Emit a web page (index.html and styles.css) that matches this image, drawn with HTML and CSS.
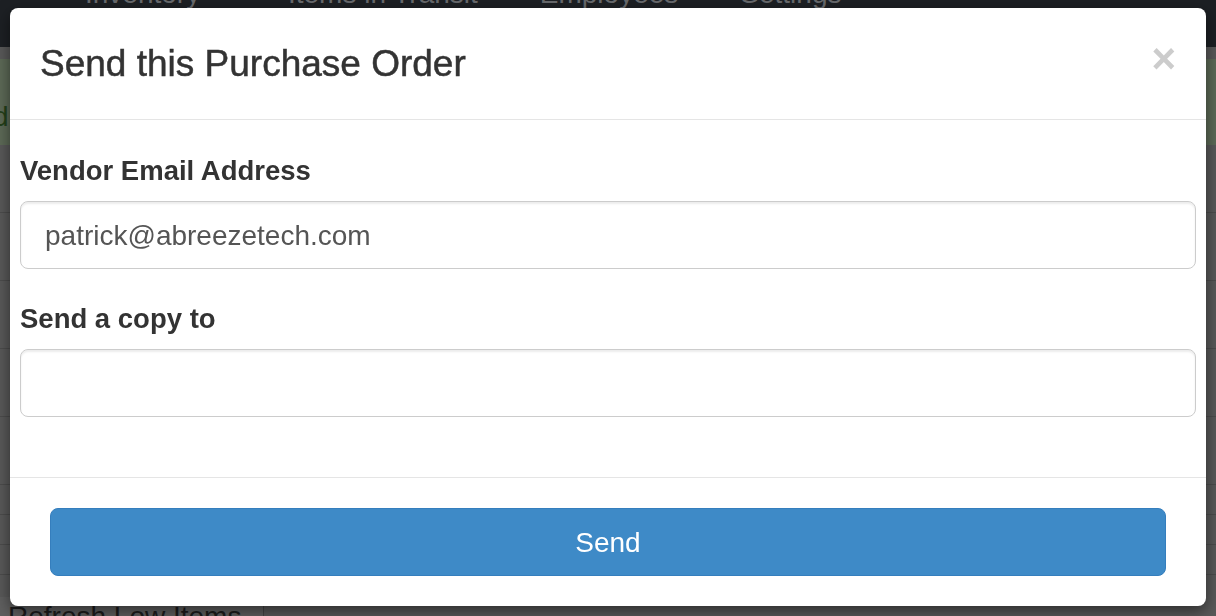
FILE: index.html
```html
<!DOCTYPE html>
<html lang="en">
<head>
    <meta charset="UTF-8">
    <meta name="viewport" content="width=device-width, initial-scale=1.0">
    <title>Send Purchase Order</title>
    <link rel="stylesheet" href="styles.css">
</head>
<body>
    <div class="page">
        <nav class="navbar">
            <ul class="nav">
                <li>Inventory <span class="caret"></span></li>
                <li>Items in Transit</li>
                <li>Employees</li>
                <li>Settings <span class="caret"></span></li>
            </ul>
        </nav>

        <div class="alert">draft saved</div>

        <div class="rows">
            <div class="row"></div>
            <div class="row"></div>
            <div class="row"></div>
            <div class="row"></div>
            <div class="row"></div>
            <div class="row thin"></div>
            <div class="row thin"></div>
            <div class="row thin"></div>
        </div>

        <div class="toolbar">
            <button class="btn-default">Refresh Low Items</button>
        </div>
    </div>

    <div class="modal">
        <div class="modal-content">
            <div class="modal-header">
                <h4 class="modal-title">Send this Purchase Order</h4>
                <button class="close" type="button">&times;</button>
            </div>
            <div class="modal-body">
                <div class="form-group">
                    <label for="vendorEmail">Vendor Email Address</label>
                    <input type="text" id="vendorEmail" class="form-control" value="patrick@abreezetech.com">
                </div>
                <div class="form-group">
                    <label for="copyTo">Send a copy to</label>
                    <input type="text" id="copyTo" class="form-control">
                </div>
            </div>
            <div class="modal-footer">
                <button class="btn-primary" type="button">Send</button>
            </div>
        </div>
    </div>
</body>
</html>
```

FILE: styles.css
```css
* {
    margin: 0;
    padding: 0;
    box-sizing: border-box;
}

body {
    font-family: "Liberation Sans", Arial, sans-serif;
    background-color: #595959;
    height: 100vh;
    overflow: hidden;
}

/* Page behind the dialog (already dimmed by the backdrop) */
.navbar {
    background-color: #1d2024;
    height: 47px;
    overflow: hidden;
}

.nav {
    list-style: none;
    display: flex;
    margin-top: -26px;
    padding-left: 54px;
}

.nav li {
    font-size: 28px;
    line-height: 40px;
    color: #686a6d;
    padding: 0 31px;
}

.caret {
    display: inline-block;
    width: 0;
    height: 0;
    margin-left: 6px;
    vertical-align: middle;
    border-top: 6px solid #686a6d;
    border-left: 6px solid transparent;
    border-right: 6px solid transparent;
}

.alert {
    margin-top: 12px;
    height: 86px;
    background-color: #5d6a57;
    color: #24401a;
    font-size: 28px;
    line-height: 32px;
    padding-top: 42px;
    text-indent: -7px;
}

.row {
    height: 68px;
    border-bottom: 1px solid #4c4c4c;
}

.row.thin {
    height: 30px;
}

.toolbar {
    padding: 22px 0 0 0;
}

.btn-default {
    font-family: inherit;
    font-size: 28px;
    line-height: 40px;
    color: #1c1c1c;
    background-color: #5f5f5f;
    border: none;
    border-right: 1px solid #444;
    padding: 0 22px 0 8px;
}

/* Dialog */
.modal {
    position: fixed;
    top: 8px;
    left: 10px;
    width: 1196px;
}

.modal-content {
    background-color: #fff;
    border-radius: 8px;
    box-shadow: 0 5px 15px rgba(0, 0, 0, 0.5);
}

.modal-header {
    display: flex;
    justify-content: space-between;
    align-items: flex-start;
    padding: 31px 30px 30px;
    border-bottom: 1px solid #e5e5e5;
}

.modal-title {
    font-size: 37px;
    line-height: 50px;
    font-weight: normal;
    color: #333;
    -webkit-text-stroke: 0.5px #333;
}

.close {
    font-family: inherit;
    font-size: 42px;
    font-weight: bold;
    line-height: 1;
    margin-top: -1px;
    color: #cccccc;
    background: none;
    border: none;
    cursor: pointer;
}

.modal-body {
    padding: 31px 10px 30px;
}

.form-group {
    margin-bottom: 30px;
}

label {
    display: block;
    font-size: 27.5px;
    line-height: 40px;
    font-weight: bold;
    color: #333;
    margin-bottom: 10px;
}

.form-control {
    display: block;
    width: 100%;
    height: 68px;
    padding: 2px 24px 0;
    font-family: inherit;
    font-size: 28px;
    color: #555;
    background-color: #fff;
    border: 1px solid #ccc;
    border-radius: 8px;
    box-shadow: inset 0 2px 2px rgba(0, 0, 0, 0.075);
}

.modal-footer {
    padding: 30px 40px;
    border-top: 1px solid #e5e5e5;
}

.btn-primary {
    display: block;
    width: 100%;
    height: 68px;
    padding-top: 1px;
    font-family: inherit;
    font-size: 28px;
    color: #fff;
    background-color: #3e8ac7;
    border: 1px solid #357ebd;
    border-radius: 8px;
    cursor: pointer;
}
```
